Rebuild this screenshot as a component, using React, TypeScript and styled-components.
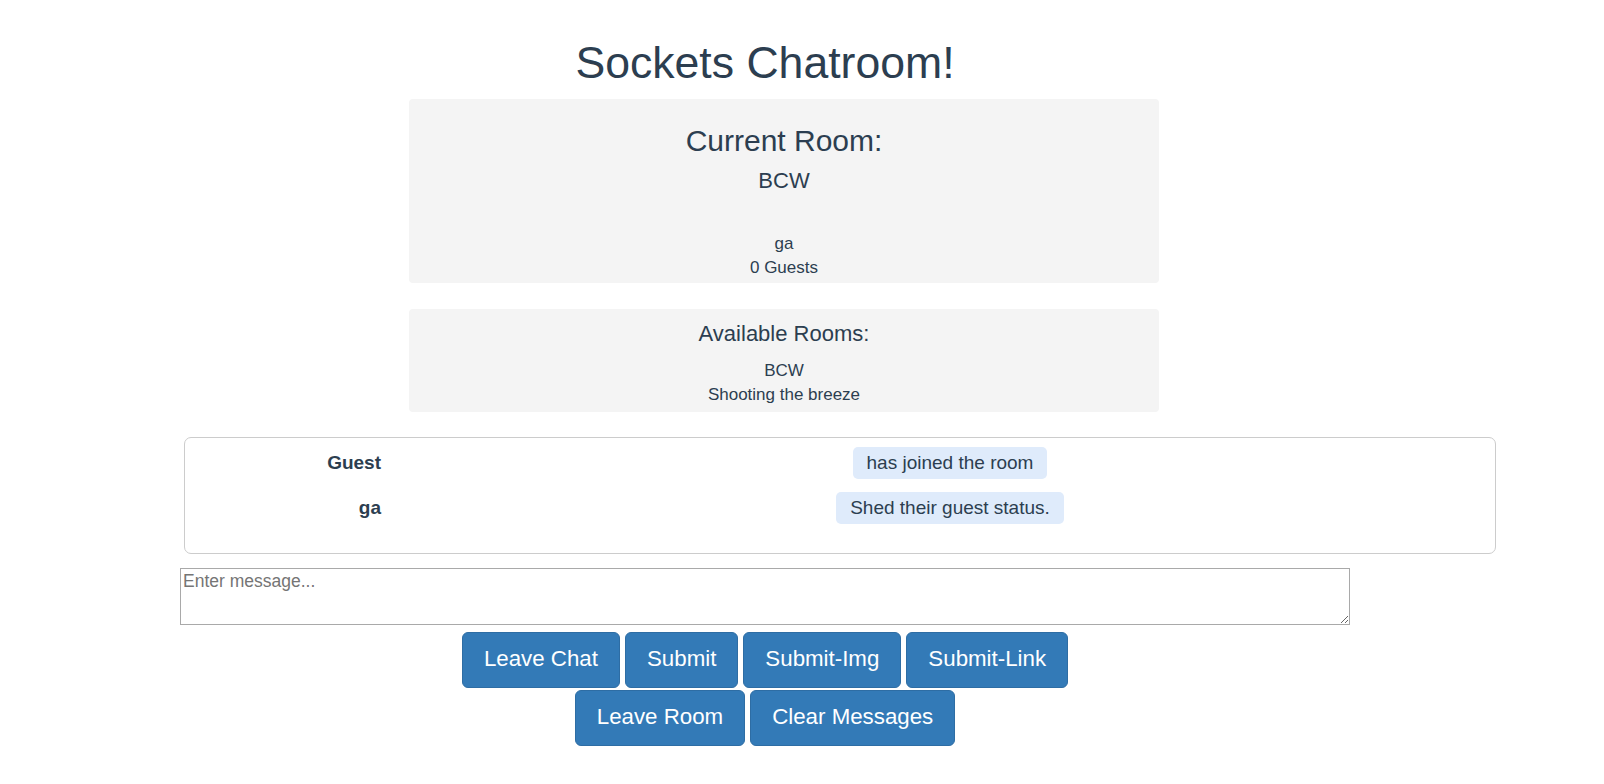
import React from "react";
import styled, { createGlobalStyle } from "styled-components";

const GlobalStyle = createGlobalStyle`
  html, body {
    margin: 0;
    padding: 0;
    background: #ffffff;
    font-family: "Liberation Sans", Arial, Helvetica, sans-serif;
    color: #2c3e50;
  }
  * { box-sizing: border-box; }
`;

const Page = styled.div`
  width: 1530px;
  display: flex;
  flex-direction: column;
  align-items: center;
  text-align: center;
`;

const Title = styled.h1`
  margin: 38px 0 0;
  font-size: 44.6px;
  font-weight: 400;
  line-height: 1.1;
  color: #2c3e50;
`;

const Panel = styled.section<{ $top: number; $pt: number; $pb: number }>`
  width: 750px;
  margin-top: ${(p) => p.$top}px;
  margin-left: 38px;
  padding: ${(p) => p.$pt}px 16px ${(p) => p.$pb}px;
  background: #f4f4f4;
  border-radius: 4px;
  display: flex;
  flex-direction: column;
  align-items: center;
`;

const PanelHeading = styled.h2<{ $size: number }>`
  margin: 0;
  font-size: ${(p) => p.$size}px;
  font-weight: 400;
  line-height: 1.1;
`;

const SubHeading = styled.h4<{ $size: number; $gap: number }>`
  margin: ${(p) => p.$gap}px 0 0;
  font-size: ${(p) => p.$size}px;
  font-weight: 400;
  line-height: ${(p) => (p.$size > 20 ? "1.1" : "24px")};
`;

const Line = styled.div<{ $gap?: number }>`
  margin-top: ${(p) => p.$gap ?? 0}px;
  font-size: 17px;
  line-height: 24px;
`;

const ChatBox = styled.div`
  width: 1312px;
  margin-top: 25px;
  margin-left: 150px;
  border: 1px solid #cccccc;
  border-radius: 7px;
  padding: 9px 0 29px;
  display: flex;
  flex-direction: column;
  gap: 13px;
`;

const MessageRow = styled.div`
  display: grid;
  grid-template-columns: 220px 1fr;
  align-items: center;
`;

const Author = styled.div`
  text-align: right;
  padding-right: 24px;
  font-size: 19px;
  font-weight: 700;
  color: #2c3e50;
`;

const MessageCell = styled.div`
  display: flex;
  justify-content: center;
`;

const Bubble = styled.span`
  display: inline-block;
  background: #dfebfb;
  border-radius: 5px;
  padding: 5px 14px;
  font-size: 19px;
  line-height: 22px;
  color: #2c3e50;
`;

const MessageInput = styled.textarea`
  width: 1170px;
  height: 57px;
  margin-top: 14px;
  border: 1px solid #a9a9a9;
  padding: 2px;
  font-family: "Liberation Sans", Arial, Helvetica, sans-serif;
  font-size: 17.5px;
  color: #333;
  resize: vertical;
  &::placeholder {
    color: #757575;
  }
`;

const ButtonRow = styled.div<{ $top: number }>`
  display: flex;
  justify-content: center;
  gap: 5px;
  margin-top: ${(p) => p.$top}px;
`;

const Button = styled.button`
  height: 56px;
  padding: 0 21px 2px;
  background: #337ab7;
  border: 1px solid #2e6da4;
  border-radius: 6px;
  color: #ffffff;
  font-family: "Liberation Sans", Arial, Helvetica, sans-serif;
  font-size: 22.3px;
  line-height: 52px;
  cursor: pointer;
`;

const messages = [
  { author: "Guest", text: "has joined the room" },
  { author: "ga", text: "Shed their guest status." },
];

export default function App() {
  return (
    <>
      <GlobalStyle />
      <Page>
        <Title>Sockets Chatroom!</Title>

        <Panel $top={12} $pt={25} $pb={3}>
          <PanelHeading $size={30}>Current Room:</PanelHeading>
          <SubHeading $size={22} $gap={12}>BCW</SubHeading>
          <Line $gap={39}>ga</Line>
          <Line>0 Guests</Line>
        </Panel>

        <Panel $top={26} $pt={13} $pb={5}>
          <PanelHeading $size={22}>Available Rooms:</PanelHeading>
          <Line $gap={13}>BCW</Line>
          <Line>Shooting the breeze</Line>
        </Panel>

        <ChatBox>
          {messages.map((m) => (
            <MessageRow key={m.author}>
              <Author>{m.author}</Author>
              <MessageCell>
                <Bubble>{m.text}</Bubble>
              </MessageCell>
            </MessageRow>
          ))}
        </ChatBox>

        <MessageInput placeholder="Enter message..." />

        <ButtonRow $top={7}>
          <Button>Leave Chat</Button>
          <Button>Submit</Button>
          <Button>Submit-Img</Button>
          <Button>Submit-Link</Button>
        </ButtonRow>
        <ButtonRow $top={2}>
          <Button>Leave Room</Button>
          <Button>Clear Messages</Button>
        </ButtonRow>
      </Page>
    </>
  );
}
